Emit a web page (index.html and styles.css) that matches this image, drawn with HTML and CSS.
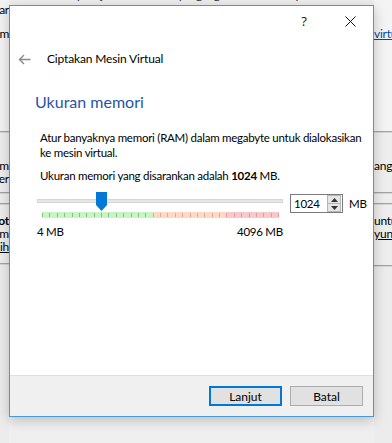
FILE: index.html
```html
<!DOCTYPE html>
<html lang="id">
<head>
<meta charset="utf-8">
<title>Ciptakan Mesin Virtual</title>
<link rel="stylesheet" href="styles.css">
</head>
<body>
<div class="desk">
  <div class="strip strip-left">
    <div class="blk blk1"><div class="frag f-ar">ar</div><div class="frag f-m">m</div></div>
    <div class="sep"></div>
    <div class="blk blk2"><div class="frag f-k1">k m</div><div class="frag">er</div></div>
    <div class="sep"></div>
    <div class="blk blk3"></div>
    <div class="sep"></div>
    <div class="blk blk4"><div class="frag f-ot">ot</div><div class="frag">k m</div><div class="frag"><u>alih</u></div></div>
    <div class="sep"></div>
    <div class="blk blk5"></div>
  </div>
  <div class="mid">
    <div class="topline">Silakan pilih jumlah memori yang ingin dialokasikan pada mesin virtual yang baru dengan tepat</div>
  </div>
  <div class="strip strip-right">
    <div class="blk blk1"><div class="frag r-virt"><u>virtual</u></div></div>
    <div class="sep"></div>
    <div class="blk blk2"><div class="frag r-ang">ang</div></div>
    <div class="sep"></div>
    <div class="blk blk3"></div>
    <div class="sep"></div>
    <div class="blk blk4"><div class="frag r-untu">untuk</div><div class="frag"><u>yung</u></div></div>
    <div class="sep"></div>
    <div class="blk blk5"></div>
  </div>
</div>

<div class="dialog">
  <div class="titlebar">
    <div class="tbtn help">?</div>
    <div class="tbtn close">
      <svg width="11" height="11" viewBox="0 0 11 11"><path d="M0.5 0.5 L10.5 10.5 M10.5 0.5 L0.5 10.5" stroke="#111" stroke-width="1"/></svg>
    </div>
  </div>
  <div class="content">
    <div class="header">
      <svg class="back" width="13" height="11" viewBox="0 0 13 11"><path d="M12.5 5.5 H1.5 M6 1 L1.5 5.5 L6 10" fill="none" stroke="#8a8a8a" stroke-width="1.4"/></svg>
      <span class="wtitle">Ciptakan Mesin Virtual</span>
    </div>
    <h1 class="heading">Ukuran memori</h1>
    <p class="para">Atur banyaknya memori (RAM) dalam megabyte untuk dialokasikan ke mesin virtual.</p>
    <p class="para rec">Ukuran memori yang disarankan adalah <b>1024</b> MB.</p>
    <div class="memrow">
      <div class="slider">
        <div class="track"></div>
        <svg class="band" width="237" height="6" viewBox="0 0 237 6" id="band">
          <rect x="0" y="0" width="111" height="6" fill="#c9f4c3"/>
          <rect x="111" y="0" width="73" height="6" fill="#fcdac7"/>
          <rect x="184" y="0" width="53" height="6" fill="#f8c9ca"/>
        </svg>
        <svg class="thumb" width="11" height="19" viewBox="0 0 11 19"><path d="M0 0 H11 V13 L5.5 19 L0 13 Z" fill="#0078d7"/></svg>
        <div class="labels"><span>4 MB</span><span>4096 MB</span></div>
      </div>
      <div class="spin">
        <span class="spinval">1024</span>
        <div class="spinbtns">
          <div class="sb up"><svg width="7" height="4" viewBox="0 0 7 4"><path d="M0 4 L3.5 0 L7 4 Z" fill="#333"/></svg></div>
          <div class="sb down"><svg width="7" height="4" viewBox="0 0 7 4"><path d="M0 0 L3.5 4 L7 0 Z" fill="#333"/></svg></div>
        </div>
      </div>
      <span class="unit">MB</span>
    </div>
  </div>
  <div class="footer">
    <button class="btn btn-default">Lanjut</button>
    <button class="btn">Batal</button>
  </div>
</div>
<script>
(function(){
  var svg=document.getElementById('band');
  var ns='http://www.w3.org/2000/svg';
  for(var i=0;i<=32;i++){
    var x=Math.round(i*236/32)+0.5;
    var c = x<111 ? '#86bd80' : (x<184 ? '#e8a98a' : '#e49a9c');
    var l=document.createElementNS(ns,'line');
    l.setAttribute('x1',x);l.setAttribute('x2',x);
    l.setAttribute('y1',1);l.setAttribute('y2',5);
    l.setAttribute('stroke',c);l.setAttribute('stroke-width',1);
    svg.appendChild(l);
  }
})();
</script>
</body>
</html>
```
FILE: styles.css
```css
* { box-sizing: border-box; }
html, body { margin: 0; padding: 0; }
body {
  width: 392px; height: 443px; overflow: hidden;
  background: #efefef;
  font-family: "Lato", "Open Sans", sans-serif;
  font-size: 11.5px; letter-spacing: -0.25px; color: #000;
  position: relative;
}
.desk { display: flex; height: 443px; }
.strip { display: flex; flex-direction: column; overflow: hidden; }
.strip-left { width: 9px; }
.strip-right { width: 18px; margin-left: auto; }
.mid { flex: 1; overflow: hidden; }
.topline { margin-top: -12px; margin-left: 30px; white-space: nowrap; font-size: 12px; line-height: 14px; color: #222; }
.blk { flex: none; background: #eeeeee; }
.strip-left .blk1 { height: 131px; background: #f3f3f3; }
.strip-right .blk1 { height: 131px; background: #f4f4f4; }
.blk2 { height: 59px; }
.blk3 { height: 9px; }
.strip-left .blk4 { height: 58px; }
.strip-right .blk4 { height: 60px; }
.blk5 { flex: 1; background: #ececec; }
.sep { height: 2px; flex: none; border-top: 1px solid #a3a3a3; background: #d6d6d6; }
.frag { white-space: nowrap; line-height: 13px; height: 13px; font-size: 12px; }
.strip-left .frag { display: flex; justify-content: flex-end; }
.f-ar { margin-top: 3px; }
.f-m { margin-top: 11px; }
.f-k1 { margin-top: 26px; }
.f-ot { margin-top: 9px; font-weight: bold; }
.r-virt { margin-top: 27px; color: #0645ad; }
.r-ang { margin-top: 26px; }
.r-untu { margin-top: 9px; }

.dialog {
  position: absolute; left: 9px; top: 5px;
  width: 365px; height: 412px;
  border: 1px solid #4a98d8;
  background: #fff;
  display: flex; flex-direction: column;
  box-shadow: 0 3px 12px rgba(0,0,0,0.22);
}
.titlebar { height: 30px; display: flex; justify-content: flex-end; flex: none; }
.tbtn { width: 46px; height: 30px; display: flex; align-items: center; justify-content: center; }
.help { font-family: "Open Sans", sans-serif; font-size: 13px; color: #111; letter-spacing: 0; }
.content { flex: 1; padding-left: 8px; }
.header { display: flex; align-items: center; height: 16px; margin-top: 15px; }
.wtitle { margin-left: 16px; line-height: 16px; font-size: 12px; letter-spacing: -0.15px; }
.heading { margin: 25px 0 0 17px; font-size: 16px; font-weight: normal; line-height: 20px; color: #1f55a8; letter-spacing: 0; }
.para { margin: 18px 0 0 22px; line-height: 15px; width: 326px; }
.rec { margin-top: 8px; }
.memrow { display: flex; align-items: flex-start; margin-top: 11px; margin-left: 19px; }
.slider { position: relative; width: 246px; }
.track { margin-top: 5px; height: 4px; background: #e6e6e6; border: 1px solid #d6d6d6; }
.band { display: block; margin: 9px 0 0 5px; }
.thumb { position: absolute; left: 59px; top: -2px; }
.labels { display: flex; justify-content: space-between; margin-top: 6px; line-height: 15px; }
.spin { margin-left: 7px; width: 53px; height: 19px; border: 1px solid #7a7a7a; display: flex; align-items: center; background: #fff; }
.spinval { margin-left: 3px; flex: 1; line-height: 15px; }
.spinbtns { width: 14px; height: 17px; display: flex; flex-direction: column; border: 1px solid #b5b5b5; margin-right: 1px; background: #e6e6e6; }
.sb { flex: 1; display: flex; align-items: center; justify-content: center; }
.sb.up { border-bottom: 1px solid #b5b5b5; }
.unit { margin-left: 6px; line-height: 19px; }

.footer {
  height: 41px; flex: none;
  border-top: 1px solid #dfdfdf; background: #f0f0f0;
  display: flex; align-items: flex-start; justify-content: flex-end;
  padding: 10px 10px 0 0; gap: 8px;
}
.btn {
  width: 73px; height: 20px; margin: 0; padding: 0;
  font-family: inherit; font-size: 12px; letter-spacing: 0; color: #000;
  background: #e1e1e1; border: 1px solid #adadad;
}
.btn-default { border: 2px solid #0078d7; }
```
